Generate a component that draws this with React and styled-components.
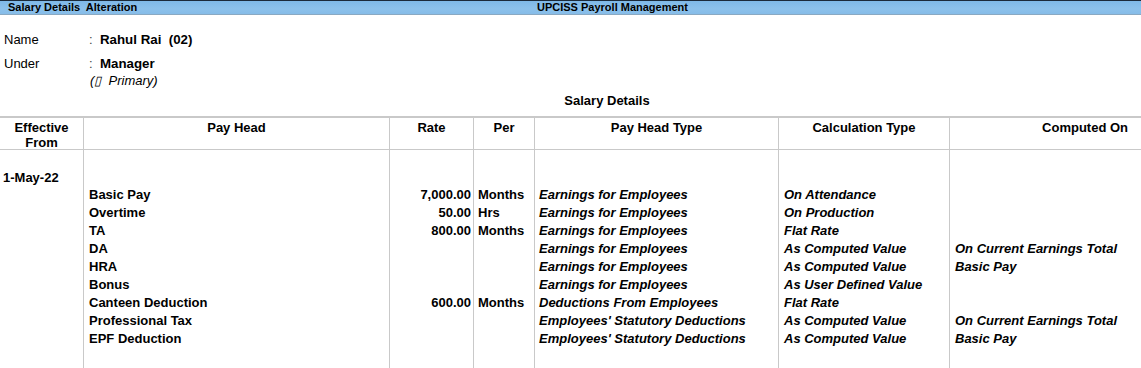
import React from "react";
import styled, { createGlobalStyle } from "styled-components";

const Global = createGlobalStyle`
  html, body { margin: 0; padding: 0; background: #fff; }
  body { font-family: "Liberation Sans", Arial, sans-serif; color: #000; }
  * { box-sizing: border-box; }
`;

const Page = styled.div`
  width: 1141px;
  height: 368px;
  overflow: hidden;
  display: flex;
  flex-direction: column;
  background: #fff;
`;

const TitleBar = styled.div`
  height: 15px;
  display: flex;
  align-items: center;
  border-top: 1px solid #1b2a3a;
  border-bottom: 1px solid #8aa9c2;
  background: linear-gradient(#7fb9e8, #8cc1eb 60%, #86bce8);
  font-size: 11px;
  font-weight: bold;
  line-height: 13px;
  white-space: pre;
`;

const BarLeft = styled.div`
  width: 537px;
  padding-left: 8px;
`;

const BarCenter = styled.div``;

const Info = styled.div`
  padding-top: 16px;
  display: flex;
  flex-direction: column;
  gap: 6px;
  font-size: 13px;
`;

const InfoRow = styled.div`
  display: grid;
  grid-template-columns: 85px 15px 1fr;
  line-height: 18px;
`;

const Label = styled.div`
  padding-left: 4px;
`;

const Colon = styled.div`
  padding-left: 4px;
  color: #444;
`;

const Value = styled.div`
  font-weight: bold;
  font-size: 13.3px;
  white-space: pre;
`;

const Sub = styled.div`
  grid-column: 2 / 4;
  font-style: italic;
  line-height: 16px;
  padding-left: 5px;
  white-space: pre;
`;

const SectionTitle = styled.div`
  text-align: center;
  font-weight: bold;
  font-size: 13px;
  line-height: 16px;
  margin-top: 4px;
  padding-left: 73px;
`;

const COLS = "83px 306px 84px 61px 244px 171px 1fr";

const HeadRow = styled.div`
  margin-top: 7px;
  display: grid;
  grid-template-columns: ${COLS};
  border-top: 2px solid #c9c9c9;
  border-bottom: 1px solid #c9c9c9;
  height: 34px;
  font-size: 13px;
  font-weight: bold;
  line-height: 15px;
`;

const HeadCell = styled.div`
  border-left: ${(p) => (p.$first ? "none" : "1px solid #c9c9c9")};
  text-align: ${(p) => p.$align || "center"};
  padding-top: 2px;
  padding-right: ${(p) => (p.$align === "right" ? "13px" : "0")};
`;

const Body = styled.div`
  flex: 1;
  display: grid;
  grid-template-columns: ${COLS};
  font-size: 13px;
  font-weight: bold;
  line-height: 18px;
`;

const Col = styled.div`
  border-left: ${(p) => (p.$first ? "none" : "1px solid #c9c9c9")};
  padding-top: ${(p) => (p.$first ? "19px" : "36px")};
  padding-left: ${(p) => p.$pl || "5px"};
  padding-right: ${(p) => p.$pr || "0"};
  text-align: ${(p) => p.$align || "left"};
  font-style: ${(p) => (p.$italic ? "italic" : "normal")};
  white-space: pre;
`;

const Line = styled.div`
  height: 18px;
`;

const rows = [
  ["Basic Pay", "7,000.00", "Months", "Earnings for Employees", "On Attendance", ""],
  ["Overtime", "50.00", "Hrs", "Earnings for Employees", "On Production", ""],
  ["TA", "800.00", "Months", "Earnings for Employees", "Flat Rate", ""],
  ["DA", "", "", "Earnings for Employees", "As Computed Value", "On Current Earnings Total"],
  ["HRA", "", "", "Earnings for Employees", "As Computed Value", "Basic Pay"],
  ["Bonus", "", "", "Earnings for Employees", "As User Defined Value", ""],
  ["Canteen Deduction", "600.00", "Months", "Deductions From Employees", "Flat Rate", ""],
  ["Professional Tax", "", "", "Employees' Statutory Deductions", "As Computed Value", "On Current Earnings Total"],
  ["EPF Deduction", "", "", "Employees' Statutory Deductions", "As Computed Value", "Basic Pay"],
];

const colProps = [
  { $pl: "5px" },
  { $align: "right", $pl: "0", $pr: "2px" },
  { $pl: "4px" },
  { $pl: "4px", $italic: true },
  { $pl: "5px", $italic: true },
  { $pl: "5px", $italic: true },
];

export default function App() {
  return (
    <Page>
      <Global />
      <TitleBar>
        <BarLeft>Salary Details  Alteration</BarLeft>
        <BarCenter>UPCISS Payroll Management</BarCenter>
      </TitleBar>
      <Info>
        <InfoRow>
          <Label>Name</Label>
          <Colon>:</Colon>
          <Value>Rahul Rai  (02)</Value>
        </InfoRow>
        <InfoRow>
          <Label>Under</Label>
          <Colon>:</Colon>
          <Value>Manager</Value>
          <Sub>(▯  Primary)</Sub>
        </InfoRow>
      </Info>
      <SectionTitle>Salary Details</SectionTitle>
      <HeadRow>
        <HeadCell $first>
          Effective
          <br />
          From
        </HeadCell>
        <HeadCell>Pay Head</HeadCell>
        <HeadCell>Rate</HeadCell>
        <HeadCell>Per</HeadCell>
        <HeadCell>Pay Head Type</HeadCell>
        <HeadCell>Calculation Type</HeadCell>
        <HeadCell $align="right">Computed On</HeadCell>
      </HeadRow>
      <Body>
        <Col $first $pl="3px">
          <Line>1-May-22</Line>
        </Col>
        {colProps.map((p, ci) => (
          <Col key={ci} {...p}>
            {rows.map((r, ri) => (
              <Line key={ri}>{r[ci]}</Line>
            ))}
          </Col>
        ))}
      </Body>
    </Page>
  );
}
